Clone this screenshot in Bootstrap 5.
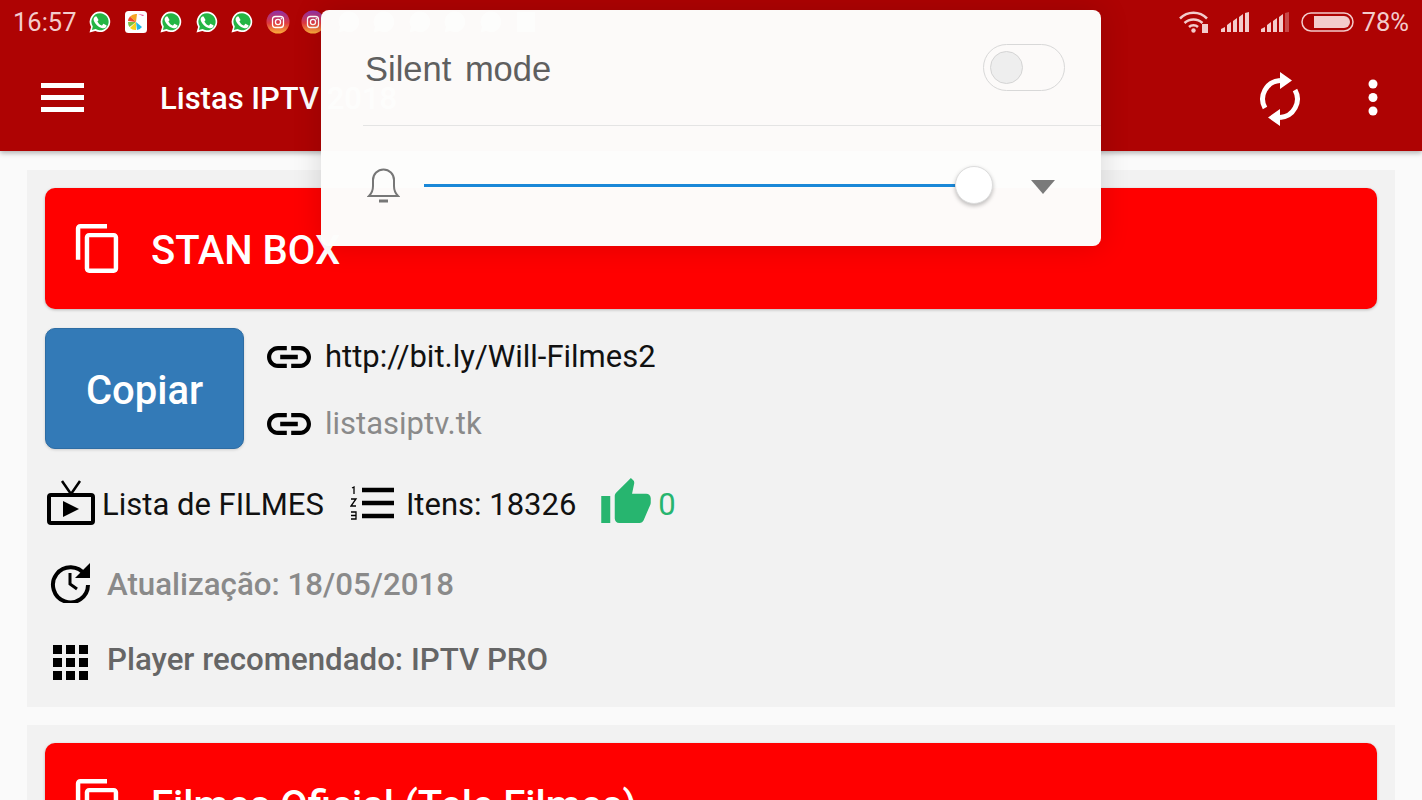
<!DOCTYPE html>
<html lang="pt">
<head>
  <meta charset="UTF-8" />
  <meta name="viewport" content="width=device-width, initial-scale=1" />
  <title>Listas IPTV 2018</title>
  <link href="https://cdn.jsdelivr.net/npm/bootstrap@5.3.3/dist/css/bootstrap.min.css" rel="stylesheet" />
  <style>
    html, body { height: 800px; overflow: hidden; }
    body { background: #fafafa; font-family: Roboto, "Liberation Sans", sans-serif; position: relative; }
    svg { display: block; flex: none; }

    .app-top { background: #ae0303; height: 151px; box-shadow: 0 2px 5px rgba(0,0,0,.3); color: #fff; }
    .status-row { height: 44px; padding: 0 13px; color: #f3cccc; font-size: 25.5px; }
    .status-time { width: 71px; }
    .status-icons { gap: 11.5px; }
    .status-right { gap: 12px; }
    .status-pct { margin-left: -4px; }
    .tool-row { height: 107px; padding: 0 0 0 41px; }
    .app-name { font-size: 31px; font-weight: 500; margin-left: 76px; line-height: 1; padding-top: 2px; }
    .sync-ic { margin-top: 2px; }
    .more-ic { margin: 1px 44px 0 65px; }

    .list-wrap { padding: 19px 27px 0; }
    .iptv-box { background: #f2f2f2; padding: 18px 18px 0; height: 537px; margin-bottom: 18px; }
    .iptv-head { background: #f00; color: #fff; height: 121px; border-radius: 10px; padding-left: 30px; gap: 32px; font-size: 40px; font-weight: 500; box-shadow: 0 1px 3px rgba(0,0,0,.25); }
    .iptv-head span { margin-top: 5px; }
    .copy-row { margin-top: 19px; height: 121px; }
    .btn.btn-copiar { width: 199px; height: 121px; background: #337ab7; border: 1px solid #2e6da4; border-radius: 10px; color: #fff; font-size: 40px; font-weight: 500; padding: 5px 0 0; box-shadow: 0 1px 3px rgba(0,0,0,.15); }
    .link-col { margin: -5px 0 0 23px; font-size: 31px; color: #111; }
    .link-line { height: 67px; gap: 14px; }
    .link-line span { margin-top: 2px; }
    .link-col .muted-link { color: #8a8a8a; }
    .info-line { font-size: 31px; color: #111; height: 38px; }
    .line-main { margin-top: 37px; }
    .line-date { margin-top: 42px; }
    .line-player { margin-top: 37px; }
    .ic-tv { margin-top: -6px; }
    .txt-lista { margin-left: 7px; }
    .ic-list { margin: -2px 12px 0 26px; }
    .ic-thumb { margin: -10px 7px 0 25px; }
    .like-count { color: #27b56f; }
    .ic-clock { margin-top: -8px; }
    .ic-grid { margin-top: 6px; }
    .info-text { font-size: 31.25px; font-weight: 500; margin-left: 14px; }
    .txt-date { color: #8a8a8a; }
    .txt-player { color: #666; }

    .sound-dialog { position: absolute; z-index: 10; left: 321px; top: 10px; width: 780px; height: 236px; background: rgba(253,253,252,.99); border-radius: 8px; box-shadow: 0 0 30px rgba(0,0,0,.14); }
    .silent-row { height: 116px; margin-left: 42px; padding: 0 36px 0 2px; border-bottom: 1px solid #e4e4e4; color: #5f5f5f; font-family: "Liberation Sans", sans-serif; font-size: 34.5px; word-spacing: 4px; }
    .silent-row span { margin-top: 4px; }
    .toggle-off { width: 82px; height: 47px; border: 1px solid #d8d8d8; border-radius: 24px; padding: 0 6px; }
    .toggle-dot { width: 33px; height: 33px; border-radius: 50%; background: #eee; border: 1px solid #d4d4d4; }
    .volume-row { height: 118px; padding: 0 46px 0 46px; }
    .vol-track { flex: 1; height: 3px; background: #1a88d8; margin-left: 24px; position: relative; }
    .vol-thumb { position: absolute; right: -20px; top: -18px; width: 38px; height: 38px; border-radius: 50%; background: #fff; border: 1px solid #ddd; box-shadow: 0 2px 4px rgba(0,0,0,.25); }
    .vol-caret { margin: 3px 0 0 58px; width: 0; height: 0; border-left: 12px solid transparent; border-right: 12px solid transparent; border-top: 14px solid #7a7a7a; }
  </style>
</head>
<body>
  <svg width="0" height="0" class="position-absolute">
    <defs>
      <linearGradient id="igrad" x1="0" y1="0" x2="0" y2="1">
        <stop offset="0" stop-color="#8e2fa8" /><stop offset=".55" stop-color="#e0393f" /><stop offset="1" stop-color="#fbb03b" />
      </linearGradient>
      <symbol id="wa" viewBox="0 0 24 24">
        <path fill="#fff" d="M12 1.500A10.300 10.300 0 0 0 3.100 17L1.500 22.600 7.300 21A10.300 10.300 0 1 0 12 1.500z" />
        <path fill="#25b544" d="M12 3.300A8.500 8.500 0 0 0 4.800 16.400L3.900 20l3.700-1A8.500 8.500 0 1 0 12 3.300z" />
        <path fill="#fff" d="M9 7.200c-.3-.6-.5-.6-.8-.6h-.6c-.3 0-.6.1-.9.4-.3.4-1.100 1.100-1.100 2.600s1.100 3 1.300 3.200c.2.200 2.200 3.500 5.400 4.700 2.700 1 3.200.8 3.800.8.600-.1 1.900-.8 2.200-1.500.3-.8.300-1.400.200-1.500-.1-.1-.3-.2-.6-.4l-2-1c-.3-.1-.5-.1-.7.200l-1 1.200c-.2.200-.3.200-.6.100-.3-.2-1.300-.5-2.400-1.500-.9-.8-1.500-1.800-1.700-2.100-.2-.3 0-.5.100-.6l.5-.5.3-.5c.1-.2.100-.4 0-.5L9 7.200z" />
      </symbol>
      <symbol id="ig" viewBox="0 0 24 24">
        <circle cx="12" cy="12" r="11.500" fill="url(#igrad)" />
        <rect x="6.500" y="6.500" width="11" height="11" rx="3" fill="none" stroke="#fff" stroke-width="1.300" />
        <circle cx="12" cy="12" r="2.600" fill="none" stroke="#fff" stroke-width="1.300" />
        <circle cx="15.300" cy="8.700" r=".8" fill="#fff" />
      </symbol>
      <symbol id="app" viewBox="0 0 24 24">
        <rect x="1" y="1" width="22" height="22" rx="3.500" fill="#fff" />
        <path fill="#f5a623" d="M12 12 6 6.500A8 8 0 0 1 13 4z" />
        <path fill="#f0492e" d="M12 12 4 11a8 8 0 0 1 2-4.500z" />
        <path fill="#7cc242" d="M12 12 4 12a8 8 0 0 0 1.500 5z" />
        <path fill="#f7d21e" d="M12 12 6 18a8 8 0 0 0 6 2z" />
        <path fill="#1fb6e8" d="M12 12 13 20a8 8 0 0 0 5-3z" />
        <path fill="#e83e8c" d="M14 4l6 1-1 1z" />
      </symbol>
      <symbol id="ghost-wa" viewBox="0 0 24 24">
        <path fill="#fff" d="M12 1.500A10.300 10.300 0 0 0 3.100 17L1.500 22.600 7.300 21A10.300 10.300 0 1 0 12 1.500z" />
      </symbol>
      <symbol id="copy-ic" viewBox="2 1 19 22">
        <path fill="#fff" d="M16 1H4c-1.100 0-2 .9-2 2v14h2V3h12V1zm3 4H8c-1.100 0-2 .9-2 2v14c0 1.100.9 2 2 2h11c1.100 0 2-.9 2-2V7c0-1.100-.9-2-2-2zm0 16H8V7h11v14z" />
      </symbol>
      <symbol id="link-ic" viewBox="2 7 20 10">
        <path fill="#000" d="M3.900 12c0-1.710 1.390-3.100 3.100-3.100h4V7H7c-2.760 0-5 2.240-5 5s2.240 5 5 5h4v-1.900H7c-1.710 0-3.100-1.390-3.100-3.100zM8 13h8v-2H8v2zm9-6h-4v1.900h4c1.710 0 3.100 1.390 3.100 3.100s-1.390 3.100-3.100 3.100h-4V17h4c2.760 0 5-2.240 5-5s-2.240-5-5-5z" />
      </symbol>
    </defs>
  </svg>

  <header class="app-top">
    <div class="status-row d-flex align-items-center">
      <span class="status-time">16:57</span>
      <div class="status-icons d-flex align-items-center ms-1">
        <svg width="24" height="24"><use href="#wa" /></svg>
        <svg width="24" height="24"><use href="#app" /></svg>
        <svg width="24" height="24"><use href="#wa" /></svg>
        <svg width="24" height="24"><use href="#wa" /></svg>
        <svg width="24" height="24"><use href="#wa" /></svg>
        <svg width="24" height="24"><use href="#ig" /></svg>
        <svg width="24" height="24"><use href="#ig" /></svg>
        <svg width="24" height="24"><use href="#ghost-wa" /></svg>
        <svg width="24" height="24"><use href="#ghost-wa" /></svg>
        <svg width="24" height="24"><use href="#ghost-wa" /></svg>
        <svg width="24" height="24"><use href="#ghost-wa" /></svg>
        <svg width="24" height="24"><use href="#ghost-wa" /></svg>
        <svg width="24" height="24"><rect x="3" y="2" width="18" height="20" fill="#fff" /></svg>
      </div>
      <div class="status-right d-flex align-items-center ms-auto">
        <svg width="30" height="24" viewBox="0 0 30 24" fill="none" stroke="#f3cccc" stroke-width="2.500">
          <path d="M1 8.500a19 19 0 0 1 27 0M5.500 13a13 13 0 0 1 18 0M10 17a6.500 6.500 0 0 1 9 0" />
          <circle cx="14.500" cy="20.500" r="2.200" fill="#f3cccc" stroke="none" />
          <rect x="23" y="14" width="6" height="9" fill="#f3cccc" stroke="none" />
        </svg>
        <svg width="28" height="20" viewBox="0 0 28 20" fill="#f3cccc">
          <path d="M0 20v-3l4-2v5zM6 20v-7l4-3v10zM12 20V9l4-3v14zM18 20V5l4-3v18zM24 20V1l4-1v20z" />
        </svg>
        <svg width="28" height="20" viewBox="0 0 28 20" fill="#f3cccc">
          <path d="M0 20v-3l4-2v5zM6 20v-7l4-3v10zM12 20V9l4-3v14zM18 20V5l4-3v18z" />
          <path d="M24 20V1l4-1v20z" opacity=".35" />
        </svg>
        <svg width="53" height="20" viewBox="0 0 53 20">
          <rect x="1" y="1" width="51" height="18" rx="9" fill="none" stroke="#f3cccc" stroke-width="1.500" />
          <path d="M13 4h30a6 6 0 0 1 0 12H13z" fill="#f3cccc" />
        </svg>
        <span class="status-pct">78%</span>
      </div>
    </div>
    <div class="tool-row d-flex align-items-center">
      <svg width="43" height="29" viewBox="0 0 43 29" fill="#fff">
        <rect width="43" height="5" /><rect y="12" width="43" height="5" /><rect y="24" width="43" height="5" />
      </svg>
      <span class="app-name">Listas IPTV 2018</span>
      <svg class="sync-ic ms-auto" width="46" height="56" viewBox="0 0 46 56" fill="none" stroke="#fff" stroke-width="5">
        <path d="M23 9.500A18.500 18.500 0 0 0 8 37" />
        <path d="M23 46.500A18.500 18.500 0 0 0 38 19" />
        <path fill="#fff" stroke="none" d="M23 1l12 8.500L23 18zM23 38l-12 8.500L23 55z" />
      </svg>
      <svg class="more-ic" width="10" height="40" viewBox="0 0 10 40" fill="#fff">
        <circle cx="5" cy="6" r="4.500" /><circle cx="5" cy="19.500" r="4.500" /><circle cx="5" cy="33" r="4.500" />
      </svg>
    </div>
  </header>

  <main class="list-wrap">
    <section class="iptv-box">
      <div class="iptv-head d-flex align-items-center">
        <svg width="44" height="49"><use href="#copy-ic" /></svg>
        <span>STAN BOX</span>
      </div>
      <div class="copy-row d-flex">
        <button type="button" class="btn btn-copiar">Copiar</button>
        <div class="link-col">
          <div class="link-line d-flex align-items-center">
            <svg width="44" height="22"><use href="#link-ic" /></svg>
            <span>http://bit.ly/Will-Filmes2</span>
          </div>
          <div class="link-line d-flex align-items-center">
            <svg width="44" height="22"><use href="#link-ic" /></svg>
            <span class="muted-link">listasiptv.tk</span>
          </div>
        </div>
      </div>
      <div class="info-line line-main d-flex align-items-center">
        <svg class="ic-tv" width="50" height="46" viewBox="0 0 50 46" fill="none" stroke="#000">
          <rect x="4" y="16" width="44" height="28" rx="2" stroke-width="4" />
          <path d="M17 2l9 13 9-13" stroke-width="2.500" />
          <path d="M18 22l16 8-16 8z" fill="#000" stroke="none" />
        </svg>
        <span class="txt-lista">Lista de FILMES</span>
        <svg class="ic-list" width="44" height="38" viewBox="0 0 44 38" fill="none" stroke="#000">
          <path d="M12 5h32M12 18h32M12 31h32" stroke-width="4.500" />
          <path d="M2 3l2-1v7M1 14h5l-5 7h5M1 27h5v7H1M1 30.500h5" stroke-width="1.300" />
        </svg>
        <span>Itens: 18326</span>
        <svg class="ic-thumb" width="50" height="45" viewBox="1 1 22 20">
          <path fill="#27b56f" d="M1 21h4V9H1v12zm22-11c0-1.100-.9-2-2-2h-6.310l.95-4.570.03-.32c0-.41-.17-.79-.44-1.060L14.170 1 7.590 7.590C7.220 7.950 7 8.450 7 9v10c0 1.100.9 2 2 2h9c.83 0 1.540-.5 1.840-1.220l3.020-7.050c.09-.23.14-.47.14-.73v-2z" />
        </svg>
        <span class="like-count">0</span>
      </div>
      <div class="info-line line-date d-flex align-items-center ms-1">
        <svg class="ic-clock" width="44" height="44" viewBox="0 0 44 44" fill="none" stroke="#000">
          <path d="M36 16A17.500 17.500 0 1 0 39 26" stroke-width="4" />
          <path d="M41 4v15H26z" fill="#000" stroke="none" />
          <path d="M21 14v11l7 5" stroke-width="3" />
        </svg>
        <span class="info-text txt-date">Atualização: 18/05/2018</span>
      </div>
      <div class="info-line line-player d-flex align-items-center ms-1">
        <svg class="ic-grid" width="44" height="38" viewBox="0 0 44 38" fill="#000">
          <rect x="4" y="1" width="9" height="9" /><rect x="17" y="1" width="9" height="9" /><rect x="30" y="1" width="9" height="9" />
          <rect x="4" y="14" width="9" height="9" /><rect x="17" y="14" width="9" height="9" /><rect x="30" y="14" width="9" height="9" />
          <rect x="4" y="27" width="9" height="9" /><rect x="17" y="27" width="9" height="9" /><rect x="30" y="27" width="9" height="9" />
        </svg>
        <span class="info-text txt-player">Player recomendado: IPTV PRO</span>
      </div>
    </section>
    <section class="iptv-box">
      <div class="iptv-head d-flex align-items-center">
        <svg width="44" height="49"><use href="#copy-ic" /></svg>
        <span>Filmes Oficial (Tele Filmes)</span>
      </div>
    </section>
  </main>

  <div class="sound-dialog">
    <div class="silent-row d-flex align-items-center justify-content-between">
      <span>Silent mode</span>
      <div class="toggle-off d-flex align-items-center"><div class="toggle-dot"></div></div>
    </div>
    <div class="volume-row d-flex align-items-center">
      <svg width="33" height="38" viewBox="0 0 33 38" fill="none" stroke="#777" stroke-width="2">
        <path d="M2 30c3-3 4-5 4-10v-6a10.500 10.500 0 0 1 21 0v6c0 5 1 7 4 10z" />
        <path d="M12 35h9" stroke-width="3" />
      </svg>
      <div class="vol-track"><div class="vol-thumb"></div></div>
      <div class="vol-caret"></div>
    </div>
  </div>
  <script src="https://cdn.jsdelivr.net/npm/bootstrap@5.3.3/dist/js/bootstrap.bundle.min.js"></script>
</body>
</html>
